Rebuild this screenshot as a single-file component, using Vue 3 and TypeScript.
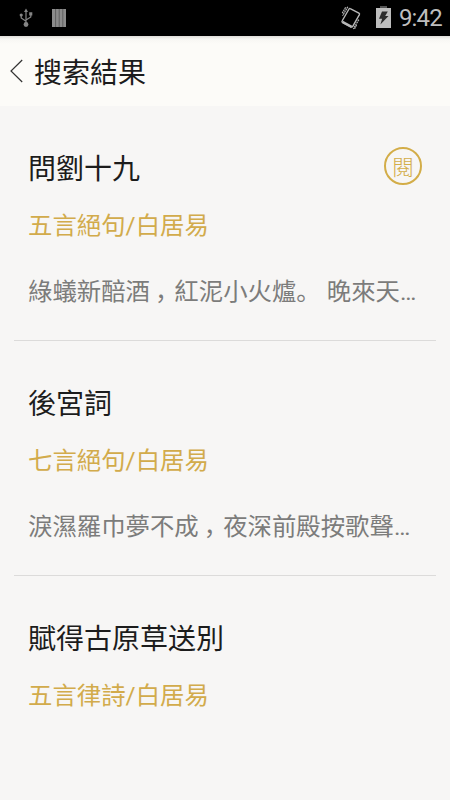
<script setup lang="ts">
interface Poem {
  title: string
  meta: string
  excerpt?: string[]
  read?: boolean
}

// Excerpts are split at the full-width comma, which is centred in its cell.
const poems: Poem[] = [
  {
    title: '問劉十九',
    meta: '五言絕句/白居易',
    excerpt: ['綠蟻新醅酒', '紅泥小火爐。 晚來天…'],
    read: true,
  },
  {
    title: '後宮詞',
    meta: '七言絕句/白居易',
    excerpt: ['淚濕羅巾夢不成', '夜深前殿按歌聲…'],
  },
  { title: '賦得古原草送別', meta: '五言律詩/白居易' },
]
</script>

<template>
  <div class="screen">
    <div class="status">
      <svg class="usb" width="14" height="20" viewBox="0 0 14 20">
        <g fill="none" stroke="#858585" stroke-width="1.2">
          <path d="M7 3V16M2.2 7.5V10L7 13.2M11.8 6.5V9L7 12" />
        </g>
        <g fill="#858585">
          <path d="M7 .5L9 4H5z" />
          <circle cx="7" cy="16.5" r="2.4" />
          <circle cx="2.2" cy="7" r="1.6" />
          <path d="M10.2 4.3h3.1v3.1h-3.1z" />
        </g>
      </svg>
      <svg class="bars" width="14" height="18" viewBox="0 0 14 18">
        <path fill="#8c8c8c" d="M0 0h14v18H0z" />
        <path stroke="#555" stroke-width=".8" d="M3.6 0v18M7.2 0v18M10.8 0v18" />
      </svg>
      <div class="spacer"></div>
      <svg class="vibrate" width="22" height="24" viewBox="0 0 22 24">
        <g fill="none" stroke="#b8b8b8">
          <path
            stroke-width="1.4"
            stroke-linejoin="round"
            d="M10.2 2.6L18.9 7.2Q19.8 7.8 19.4 8.6L12.6 20.6Q12 21.4 11.1 20.9L2.5 16.4Q1.6 15.8 2.1 15L9 3Q9.5 2.2 10.2 2.6z"
          />
          <path stroke-width="2.4" d="M2.4 15.9L11.6 20.9" />
          <path
            stroke-width="1.2"
            stroke-dasharray="1.8 .6"
            d="M7.8 .8L2.6 9.8M5.6 1.4L2 7.6M18.8 13.6L13.4 23M16.6 19L14.6 22.6"
          />
        </g>
      </svg>
      <svg class="battery" width="15" height="22" viewBox="0 0 15 22">
        <path fill="#555" d="M4 0h7v2H4z" />
        <path fill="#bdbdbd" d="M0 2h15v20H0z" />
        <path fill="#2b2b2b" d="M6 5.5h5.8L9.2 10h3.3L4.4 18.5l1.7-5.8H3z" />
      </svg>
      <span class="clock">9:42</span>
    </div>

    <header class="header">
      <svg class="back" width="13" height="24" viewBox="0 0 13 24">
        <path fill="none" stroke="#333" stroke-width="1.2" d="M12.2 1L1 12L12.2 23" />
      </svg>
      <h1>搜索結果</h1>
    </header>

    <main>
      <article v-for="poem in poems" :key="poem.title" class="poem">
        <div class="top">
          <h2>{{ poem.title }}</h2>
          <span v-if="poem.read" class="badge">閱</span>
        </div>
        <p class="meta">{{ poem.meta }}</p>
        <p v-if="poem.excerpt" class="excerpt">
          {{ poem.excerpt[0] }}<span class="comma">，</span>{{ poem.excerpt[1] }}
        </p>
      </article>
    </main>
  </div>
</template>

<style>
body {
  margin: 0;
}
</style>

<style scoped>
.screen {
  width: 450px;
  height: 800px;
  overflow: hidden;
  background: #f7f6f5;
  font-family: Roboto, 'Noto Sans CJK SC', sans-serif;
  color: #1c1c1c;
}
.status {
  display: flex;
  align-items: center;
  height: 36px;
  box-sizing: border-box;
  padding: 0 8px 0 19px;
  background: #000;
}
.bars {
  margin-left: 19px;
}
.spacer {
  flex: 1;
}
.battery {
  margin: 0 8px 2px 14px;
}
.clock {
  font-size: 24px;
  line-height: 36px;
  letter-spacing: -0.8px;
  color: #bebebe;
}
.header {
  display: flex;
  align-items: center;
  height: 70px;
  box-sizing: border-box;
  padding-left: 10px;
  background: linear-gradient(#deddd9 0, #f7f6f3 3px, #fcfbf8 8px);
}
.back {
  margin-right: 11px;
}
h1,
h2,
p {
  margin: 0;
  font-weight: 400;
  white-space: nowrap;
}
h1 {
  padding-top: 5px;
  font-size: 28px;
  line-height: 40px;
}
.poem {
  height: 235px;
  box-sizing: border-box;
  margin: 0 14px;
  padding: 40px 14px 0;
  border-bottom: 1px solid #dcdbda;
}
.poem:last-child {
  border-bottom: 0;
}
.top {
  display: flex;
  justify-content: space-between;
  align-items: center;
  height: 40px;
}
h2 {
  padding-top: 7px;
  font-size: 28px;
  line-height: 40px;
}
.badge {
  width: 38px;
  height: 38px;
  box-sizing: border-box;
  border: 2px solid #d3ad48;
  border-radius: 50%;
  font-family: 'Noto Sans CJK SC', sans-serif;
  font-size: 22px;
  font-weight: 300;
  line-height: 33px;
  text-align: center;
  color: #d3ad48;
}
.meta {
  margin-top: 22px;
  font-size: 24.4px;
  line-height: 36px;
  color: #d2ab4b;
}
.excerpt {
  margin-top: 30px;
  font-size: 24.4px;
  line-height: 36px;
  color: #7c7c7b;
}
.comma {
  display: inline-block;
  width: 1em;
  box-sizing: border-box;
  text-indent: 5px;
  line-height: 1;
}
</style>
